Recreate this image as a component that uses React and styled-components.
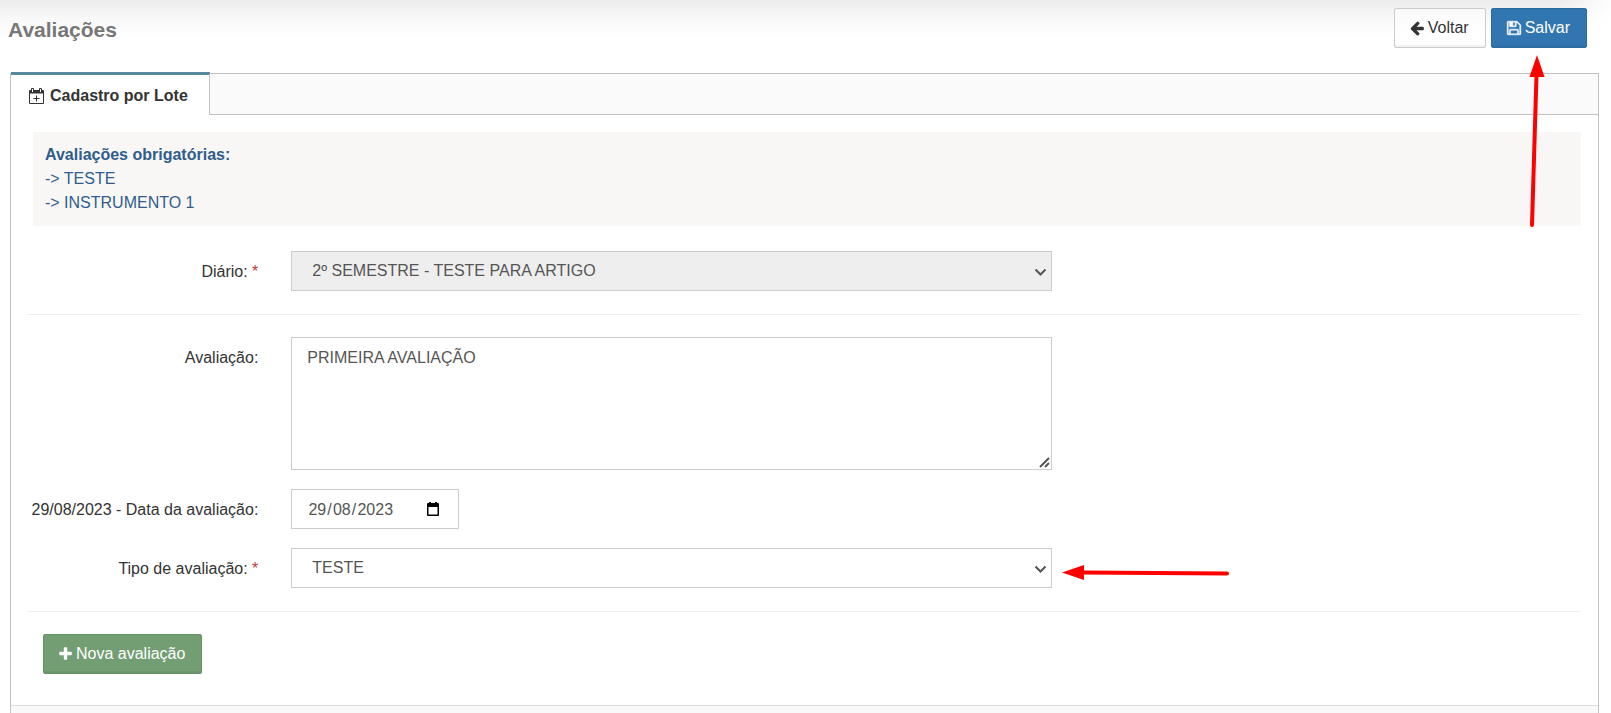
import React from "react";
import styled, { createGlobalStyle, css } from "styled-components";

const ICONS = {
  back: "M1536 896v128q0 53-32.500 90.500t-84.500 37.500h-704l293 294q38 36 38 90t-38 90l-75 76q-37 37-90 37-52 0-91-37l-651-652q-37-37-37-90 0-52 37-91l651-650q38-38 91-38 52 0 90 38l75 74q38 38 38 91t-38 91l-293 293h704q52 0 84.500 37.500t32.500 90.500z",
  save: "M384 1536h768v-384h-768v384zm896 0h128v-896q0-14-10-38.500t-20-34.500l-281-281q-10-10-34-20t-39-10v416q0 40-28 68t-68 28h-576q-40 0-68-28t-28-68v-416h-128v1280h128v-416q0-40 28-68t68-28h832q40 0 68 28t28 68v416zm-384-928v-320q0-13-9.500-22.500t-22.500-9.500h-192q-13 0-22.500 9.500t-9.500 22.500v320q0 13 9.500 22.500t22.500 9.500h192q13 0 22.500-9.500t9.500-22.500zm640 32v928q0 40-28 68t-68 28h-1344q-40 0-68-28t-28-68v-1344q0-40 28-68t68-28h928q40 0 88 20t76 48l280 280q28 28 48 76t20 88z",
  plus: "M1408 736v192q0 40-28 68t-68 28h-416v416q0 40-28 68t-68 28h-192q-40 0-68-28t-28-68v-416h-416q-40 0-68-28t-28-68v-192q0-40 28-68t68-28h416v-416q0-40 28-68t68-28h192q40 0 68 28t28 68v416h416q40 0 68 28t28 68z",
};

const GlyphIcon = ({ name, width = 14, height = 16 }) => (
  <Glyph
    width={width}
    height={height}
    viewBox={name === "plus" ? "0 0 1408 1792" : "0 0 1536 1792"}
    $bold={name === "save"}
    aria-hidden="true"
  >
    <path d={ICONS[name]} />
  </Glyph>
);

const CalendarPlusIcon = () => (
  <Glyph width="15" height="16" viewBox="0 0 15 16" aria-hidden="true">
    <path
      d="M1 2h1V1a1 1 0 0 1 1-1h1a1 1 0 0 1 1 1v1h5V1a1 1 0 0 1 1-1h1a1 1 0 0 1 1 1v1h1a1 1 0 0 1 1 1v12a1 1 0 0 1-1 1H1a1 1 0 0 1-1-1V3a1 1 0 0 1 1-1zM1 5.500V15h13V5.500zM3 1v3h1V1zm8 0v3h1V1zM7 7.500h1V10h2.500v1H8v2.500H7V11H4.500v-1H7z"
      fillRule="evenodd"
    />
  </Glyph>
);

const SelectBox = ({ children, ...props }) => (
  <ControlWrap>
    <Select {...props}>{children}</Select>
    <Chevron width="13" height="9" viewBox="0 0 13 9" aria-hidden="true">
      <path d="M1.500 1.500L6.500 6.500L11.500 1.500" />
    </Chevron>
  </ControlWrap>
);

const App = () => {
  return (
    <Page>
      <GlobalStyle />
      <Header>
        <Title>Avaliações</Title>
        <Actions>
          <Button type="button">
            <GlyphIcon name="back" /> Voltar
          </Button>
          <Button type="button" $variant="primary">
            <GlyphIcon name="save" /> Salvar
          </Button>
        </Actions>
      </Header>

      <Panel>
        <TabList role="tablist">
          <Tab type="button" role="tab" aria-selected="true">
            <CalendarPlusIcon /> Cadastro por Lote
          </Tab>
        </TabList>

        <PanelBody>
          <Notice>
            <strong>Avaliações obrigatórias:</strong>
            <span>-&gt; TESTE</span>
            <span>-&gt; INSTRUMENTO 1</span>
          </Notice>

          <Row>
            <Label htmlFor="diario">
              Diário: <Required>*</Required>
            </Label>
            <Field>
              <SelectBox id="diario" disabled defaultValue="2">
                <option value="2">2º SEMESTRE - TESTE PARA ARTIGO</option>
              </SelectBox>
            </Field>
          </Row>

          <Divider />

          <Fields>
            <Row>
              <Label htmlFor="avaliacao">Avaliação:</Label>
              <Field>
                <ControlWrap>
                  <TextArea id="avaliacao" defaultValue="PRIMEIRA AVALIAÇÃO" />
                  <ResizeGrip width="11" height="11" viewBox="0 0 11 11" aria-hidden="true">
                    <path d="M1 10L10 1M6 10L10 6" />
                  </ResizeGrip>
                </ControlWrap>
              </Field>
            </Row>
            <Row>
              <Label htmlFor="dia">29/08/2023 - Data da avaliação:</Label>
              <Field>
                <DateBox>
                  <DatePart id="dia" maxLength="2" defaultValue="29" />/
                  <DatePart aria-label="Mês" maxLength="2" defaultValue="08" />/
                  <DatePart aria-label="Ano" maxLength="4" defaultValue="2023" $year />
                  <PickerButton type="button" aria-label="Abrir calendário">
                    <svg width="14" height="15" viewBox="0 0 14 15">
                      <path
                        d="M2 1h1V0h2v1h4V0h2v1h1a1 1 0 0 1 1 1v11a1 1 0 0 1-1 1H2a1 1 0 0 1-1-1V2a1 1 0 0 1 1-1zM2.500 5v7.500h9V5z"
                        fillRule="evenodd"
                      />
                    </svg>
                  </PickerButton>
                </DateBox>
              </Field>
            </Row>
            <Row>
              <Label htmlFor="tipo">
                Tipo de avaliação: <Required>*</Required>
              </Label>
              <Field>
                <SelectBox id="tipo" defaultValue="teste">
                  <option value="teste">TESTE</option>
                  <option value="instrumento">INSTRUMENTO 1</option>
                </SelectBox>
                <LeftArrow width="168" height="18" viewBox="0 0 168 18" aria-hidden="true">
                  <path d="M20 8.500L165 9.500" />
                  <polygon points="0,8.500 22,1 22,16" />
                </LeftArrow>
              </Field>
            </Row>
          </Fields>

          <Divider />

          <FormActions>
            <Button type="button" $variant="success">
              <GlyphIcon name="plus" width={13} /> Nova avaliação
            </Button>
          </FormActions>
        </PanelBody>

        <PanelFooter />
      </Panel>

      <UpArrow width="18" height="174" viewBox="0 0 18 174" aria-hidden="true">
        <path d="M8.500 20L4 170" />
        <polygon points="9,0 1.500,22 16.500,22" />
      </UpArrow>
    </Page>
  );
};

const GlobalStyle = createGlobalStyle`
  *, *::before, *::after {
    box-sizing: border-box;
  }

  body {
    margin: 0;
    overflow: hidden;
    background: #fff;
    color: #333;
    font-family: "Liberation Sans", Arial, sans-serif;
    font-size: 16px;
    line-height: 24px;
  }

  button, input, select, textarea {
    font: inherit;
  }
`;

const Page = styled.div`
  position: relative;
  min-height: 100vh;

  /* shadow cast by the top bar */
  &::before {
    content: "";
    position: absolute;
    top: -100px;
    left: -40px;
    right: 24px;
    height: 100px;
    box-shadow: 0 0 40px rgba(0, 0, 0, 0.16);
  }
`;

const Header = styled.header`
  position: relative;
  display: flex;
  justify-content: space-between;
  align-items: flex-start;
  padding: 8px 24px 0 8px;
`;

const Title = styled.h1`
  margin: 0;
  padding-top: 10px;
  color: #777;
  font-size: 21px;
  line-height: 24px;
`;

const Actions = styled.div`
  display: flex;
  gap: 5px;
`;

const variants = {
  primary: css`
    color: #fff;
    background: #3276b1;
    border-color: #2c699d;
  `,
  success: css`
    color: #fff;
    background: #739e73;
    border-color: #659265;
  `,
};

const Button = styled.button`
  display: inline-flex;
  align-items: center;
  gap: 4px;
  height: 40px;
  padding: 0 16px 0 15px;
  border: 1px solid #ccc;
  border-radius: 2px;
  background: rgba(255, 255, 255, 0.5);
  color: #333;
  box-shadow: inset 0 -2px 0 rgba(0, 0, 0, 0.05);
  white-space: nowrap;
  cursor: pointer;
  ${(p) => variants[p.$variant]}
`;

const Glyph = styled.svg`
  flex: none;
  fill: currentColor;
  stroke: currentColor;
  stroke-width: ${(p) => (p.$bold ? 50 : 0)};
  overflow: visible;
`;

const Panel = styled.section`
  position: relative;
  margin: 25px 12px 0 10px;
  border: 1px solid #c2c2c2;
  border-bottom: 0;
`;

const TabList = styled.div`
  display: flex;
  height: 41px;
  background: #fafafa;
  border-bottom: 1px solid #c2c2c2;
`;

const Tab = styled.button`
  display: flex;
  align-items: center;
  gap: 6px;
  height: 43px;
  margin-top: -2px;
  padding: 2px 21px 0 18px;
  border: 0;
  border-top: 3px solid #57889c;
  border-right: 1px solid #c2c2c2;
  background: #fff;
  color: #333;
  font-weight: bold;
`;

const PanelBody = styled.div`
  padding: 17px 17px 31px 16px;
`;

const Notice = styled.div`
  display: flex;
  flex-direction: column;
  margin: 0 0 25px 6px;
  padding: 11px 12px;
  background: #f8f7f6;
  color: #305d8c;
`;

const Fields = styled.div`
  display: grid;
  gap: 19px;
`;

const Row = styled.div`
  display: grid;
  grid-template-columns: repeat(12, minmax(0, 1fr));
  column-gap: 32px;
`;

const Label = styled.label`
  grid-column: span 2;
  padding: 9px 1px 0 0;
  text-align: right;
  white-space: nowrap;
`;

const Required = styled.span`
  color: #c0393b;
`;

const Field = styled.div`
  position: relative;
  grid-column: span 6;
`;

const ControlWrap = styled.div`
  position: relative;
`;

const control = css`
  display: block;
  height: 40px;
  border: 1px solid #ccc;
  border-radius: 0;
  background-color: #fff;
  color: #555;
`;

const Select = styled.select`
  ${control}
  width: 100%;
  padding: 0 32px 0 20px;
  appearance: none;

  &:disabled {
    background-color: #eee;
    opacity: 1;
  }
`;

const Chevron = styled.svg`
  position: absolute;
  top: 17px;
  right: 5px;
  fill: none;
  stroke: #555;
  stroke-width: 2;
  pointer-events: none;
`;

const TextArea = styled.textarea`
  ${control}
  width: 100%;
  height: 133px;
  padding: 8px 15px;

  &::-webkit-resizer {
    display: none;
  }
`;

const ResizeGrip = styled.svg`
  position: absolute;
  right: 2px;
  bottom: 2px;
  fill: none;
  stroke: #555;
  stroke-width: 2;
  pointer-events: none;
`;

const DateBox = styled.div`
  ${control}
  display: flex;
  align-items: center;
  width: 168px;
  padding: 1px 15px 0;
`;

const DatePart = styled.input`
  width: ${(p) => (p.$year ? 38 : 20)}px;
  padding: 0;
  border: 0;
  background: none;
  color: inherit;
  text-align: center;
`;

const PickerButton = styled.button`
  display: flex;
  margin-left: auto;
  padding: 0 3px;
  border: 0;
  background: none;
`;

const Divider = styled.hr`
  height: 1px;
  margin: 23px 0 22px;
  border: 0;
  background: #eee;
`;

const FormActions = styled.div`
  padding-left: 16px;
`;

const PanelFooter = styled.footer`
  height: 40px;
  background: #f9f9f9;
  border-top: 1px solid #ddd;
`;

const arrow = css`
  position: absolute;
  fill: #f00;
  pointer-events: none;

  path {
    fill: none;
    stroke: #f00;
    stroke-width: 4;
    stroke-linecap: round;
  }
`;

const UpArrow = styled.svg`
  ${arrow}
  top: 55px;
  right: 65px;
`;

const LeftArrow = styled.svg`
  ${arrow}
  top: 16px;
  left: calc(100% + 10px);
`;

export default App;
